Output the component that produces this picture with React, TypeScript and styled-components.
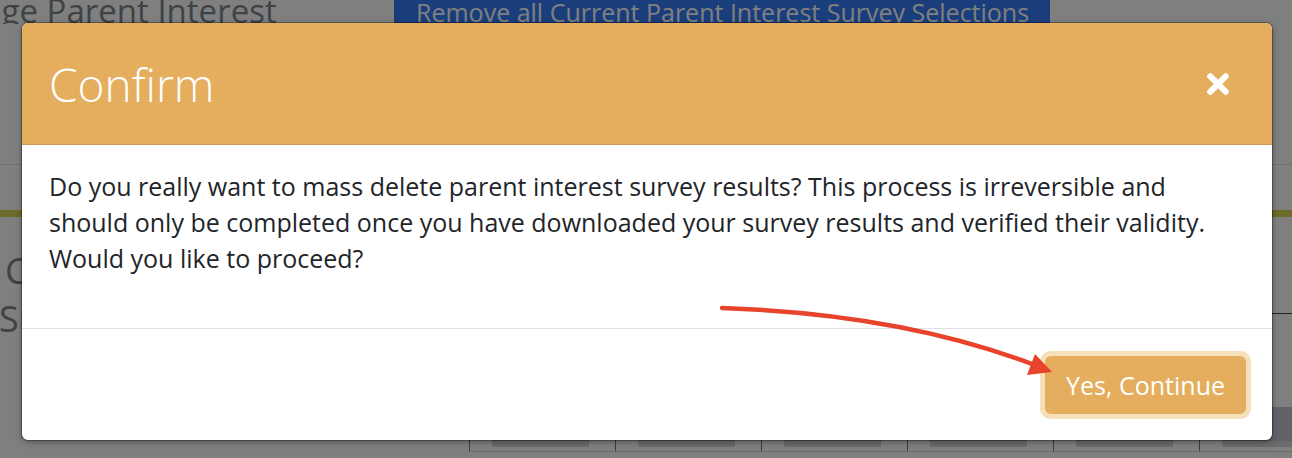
import React from 'react'
import styled, { createGlobalStyle } from 'styled-components'
import { FaTimes } from 'react-icons/fa'

const GlobalStyle = createGlobalStyle`
    html, body {
        margin: 0;
        padding: 0;
        background: #fff;
    }
    body {
        font-family: 'Open Sans', 'Liberation Sans', sans-serif;
    }
`

const Page = styled.div`
    position: relative;
    width: 1292px;
    height: 458px;
    overflow: hidden;
    background: #fff;
`

const TopRow = styled.div`
    display: flex;
    align-items: flex-end;
    height: 24px;
    overflow: hidden;
`

const TitleBox = styled.div`
    width: 394px;
    flex-shrink: 0;
    overflow: hidden;
`

const PageTitle = styled.h1`
    margin: 0 0 -5px -85px;
    font-size: 33px;
    line-height: 36px;
    font-weight: 400;
    color: #7b868c;
    white-space: nowrap;
`

const RemoveButton = styled.button`
    width: 656px;
    height: 40px;
    margin-bottom: -8px;
    padding: 0 22px;
    border: 0;
    background: #347af8;
    color: #fff;
    font-family: inherit;
    font-size: 25px;
    line-height: 40px;
    text-align: left;
    white-space: nowrap;
`

const Rule = styled.div`
    margin-top: 140px;
    height: 1px;
    background: #e0e0e0;
`

const AccentBar = styled.div`
    margin-top: 45px;
    height: 7px;
    background: #d6d654;
`

const Lower = styled.div`
    display: flex;
`

const SideHeading = styled.div`
    width: 469px;
    flex-shrink: 0;
    padding-top: 30px;
    font-size: 36px;
    line-height: 48px;
    color: #7b868c;
    white-space: nowrap;
`

const HeadingLine = styled.div<{ indent: number }>`
    margin-left: ${({ indent }) => indent}px;
`

const Table = styled.div`
    flex: 1;
`

const TableHead = styled.div`
    height: 96px;
    border-bottom: 1px solid #444;
`

const TableRow = styled.div`
    display: flex;
`

const Cell = styled.div`
    width: 146px;
    height: 138px;
    flex-shrink: 0;
    display: flex;
    align-items: flex-end;
    padding: 0 20px 10px 18px;
    border-left: 1px solid #747e88;
    border-bottom: 1px solid #d4d6d8;
    box-sizing: border-box;
`

const Group = styled.div`
    display: flex;
    width: 105px;
    height: 34px;
    border-radius: 0 0 6px 6px;
    overflow: hidden;
    background: #bec4cc;
    box-shadow: 0 10px 0 -4px #d4d6d8;
`

const GroupHalf = styled.div`
    flex: 1;
    & + & {
        border-left: 1px solid #a9b0b8;
    }
`

const Overlay = styled.div`
    position: absolute;
    inset: 0;
    padding: 23px 20px 0 22px;
    background: rgba(0, 0, 0, 0.5);
`

const Modal = styled.div`
    width: 1250px;
    border-radius: 6px;
    overflow: hidden;
    background: #fff;
    box-shadow: 0 0 0 1px rgba(0, 0, 0, 0.28), 0 2px 6px rgba(0, 0, 0, 0.35);
`

const Header = styled.div`
    display: flex;
    align-items: center;
    justify-content: space-between;
    height: 121px;
    padding: 0 38px 0 27px;
    background: #e5ae5e;
    border-bottom: 1px solid #cf9a55;
`

const Title = styled.h2`
    margin: 0;
    font-size: 46px;
    font-weight: 300;
    line-height: 1;
    color: #fff;
`

const CloseButton = styled.button`
    display: flex;
    padding: 0;
    border: 0;
    background: none;
    color: #fff;
    cursor: pointer;
`

const Body = styled.div`
    padding: 23px 27px 52px;
    border-bottom: 1px solid #dee2e6;
`

const Message = styled.p`
    margin: 0;
    font-size: 25px;
    line-height: 36px;
    color: #212529;
`

const Footer = styled.div`
    display: flex;
    align-items: center;
    justify-content: flex-end;
    height: 111px;
    padding-right: 26px;
`

const ConfirmButton = styled.button`
    height: 58px;
    padding: 0 21px;
    border: 0;
    border-radius: 6px;
    background: #e5ae5e;
    box-shadow: 0 0 0 5px #f6dfbb;
    color: #fff;
    font-family: inherit;
    font-size: 25px;
    line-height: 58px;
    cursor: pointer;
`

const Annotation = styled.svg`
    position: absolute;
    left: 0;
    top: 0;
    pointer-events: none;
`

const cells = [0, 1, 2, 3, 4, 5]

export default function App() {
    return (
        <>
            <GlobalStyle />
            <Page>
                <TopRow>
                    <TitleBox>
                        <PageTitle>Manage Parent Interest</PageTitle>
                    </TitleBox>
                    <RemoveButton>Remove all Current Parent Interest Survey Selections</RemoveButton>
                </TopRow>
                <Rule />
                <AccentBar />
                <Lower>
                    <SideHeading>
                        <HeadingLine indent={5}>Current Parent Interest</HeadingLine>
                        <HeadingLine indent={-1}>Survey Results</HeadingLine>
                    </SideHeading>
                    <Table>
                        <TableHead />
                        <TableRow>
                            {cells.map(c => (
                                <Cell key={c}>
                                    <Group>
                                        <GroupHalf />
                                        <GroupHalf />
                                    </Group>
                                </Cell>
                            ))}
                        </TableRow>
                    </Table>
                </Lower>

                <Overlay>
                    <Modal role="dialog" aria-label="Confirm">
                        <Header>
                            <Title>Confirm</Title>
                            <CloseButton aria-label="Close">
                                <FaTimes size={32} />
                            </CloseButton>
                        </Header>
                        <Body>
                            <Message>
                                Do you really want to mass delete parent interest survey results? This process is
                                irreversible and
                                <br />
                                should only be completed once you have downloaded your survey results and verified
                                their validity.
                                <br />
                                Would you like to proceed?
                            </Message>
                        </Body>
                        <Footer>
                            <ConfirmButton>Yes, Continue</ConfirmButton>
                        </Footer>
                    </Modal>
                </Overlay>

                <Annotation width="1292" height="458" viewBox="0 0 1292 458">
                    <path
                        d="M722 308 Q 900 314 1032 364"
                        fill="none"
                        stroke="#e8432b"
                        strokeWidth="4.5"
                        strokeLinecap="round"
                    />
                    <polygon points="1052,372 1035,354 1027,375" fill="#e8432b" />
                </Annotation>
            </Page>
        </>
    )
}
